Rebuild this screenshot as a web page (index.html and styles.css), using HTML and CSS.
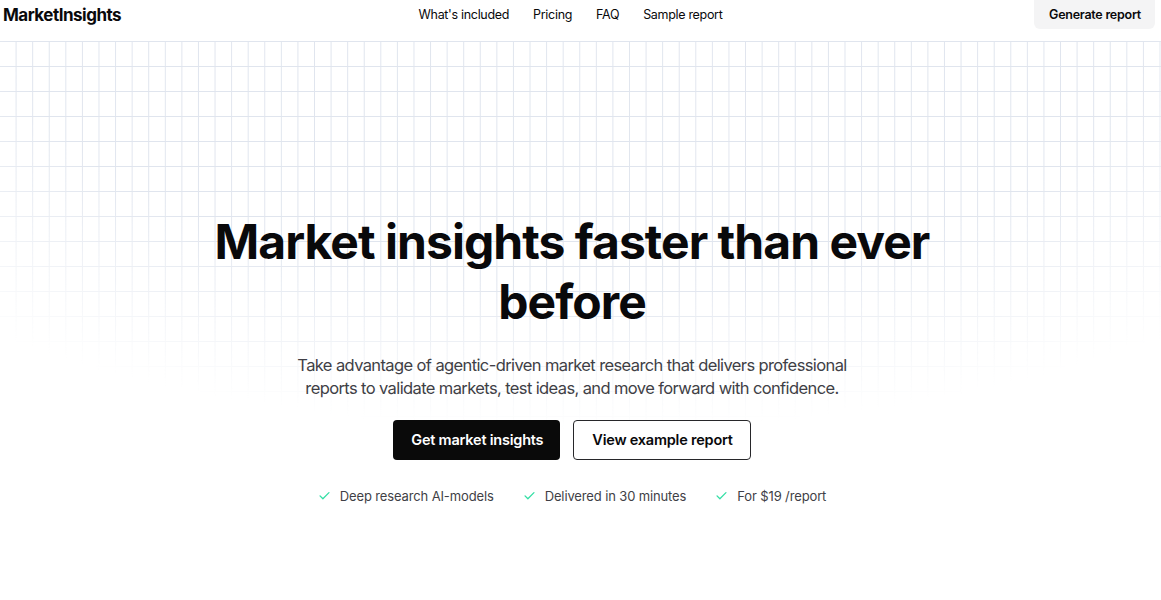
FILE: index.html
```html
<!DOCTYPE html>
<html lang="en">
<head>
<meta charset="utf-8">
<title>MarketInsights</title>
<link rel="stylesheet" href="styles.css">
</head>
<body>
<header class="site-header">
  <div class="header-row">
    <div class="brand">MarketInsights</div>
    <nav class="nav">
      <a href="#">What's included</a>
      <a href="#">Pricing</a>
      <a href="#">FAQ</a>
      <a href="#">Sample report</a>
    </nav>
    <div class="header-actions">
      <a class="btn-generate" href="#">Generate report</a>
    </div>
  </div>
</header>
<main class="hero">
  <div class="hero-inner">
    <h1 class="hero-title">Market insights faster than ever before</h1>
    <p class="hero-sub">Take advantage of agentic-driven market research that delivers professional<br>reports to validate markets, test ideas, and move forward with confidence.</p>
    <div class="hero-actions">
      <a class="btn btn-primary" href="#">Get market insights</a>
      <a class="btn btn-outline" href="#">View example report</a>
    </div>
    <ul class="features">
      <li><svg class="check" viewBox="0 0 16 16"><path d="M2.5 8.5l3.5 3.5L13.5 4.5"/></svg>Deep research AI-models</li>
      <li><svg class="check" viewBox="0 0 16 16"><path d="M2.5 8.5l3.5 3.5L13.5 4.5"/></svg>Delivered in 30 minutes</li>
      <li><svg class="check" viewBox="0 0 16 16"><path d="M2.5 8.5l3.5 3.5L13.5 4.5"/></svg>For $19 /report</li>
    </ul>
  </div>
</main>
</body>
</html>
```

FILE: styles.css
```css
* { box-sizing: border-box; }
html, body { margin: 0; padding: 0; }
body {
  font-family: Inter, "Noto Sans", "Liberation Sans", sans-serif;
  color: #09090b;
  background: #ffffff;
  width: 1161px;
  overflow: hidden;
}
a { color: inherit; text-decoration: none; }

.site-header {
  height: 41px;
  padding: 0 6px 0 3px;
}
.header-row {
  height: 29px;
  display: flex;
  align-items: center;
}
.brand {
  flex: 1 1 0;
  font-size: 17px;
  font-weight: 700;
  letter-spacing: -0.03em;
}
.nav {
  display: flex;
  gap: 24px;
  font-size: 12.5px;
  letter-spacing: -0.025em;
  font-weight: 400;
  margin-right: 17px;
}
.header-actions {
  flex: 1 1 0;
  display: flex;
  justify-content: flex-end;
}
.btn-generate {
  height: 29px;
  display: flex;
  align-items: center;
  padding: 0 14px 0 15px;
  background: #f4f4f5;
  border-radius: 0 0 6px 6px;
  font-size: 12.5px;
  letter-spacing: -0.02em;
  font-weight: 600;
}

.hero {
  position: relative;
  height: 559px;
}
.hero::before {
  content: "";
  position: absolute;
  left: 0; right: 0; top: 0;
  height: 470px;
  background-image:
    linear-gradient(to right, transparent calc(100% - 1px), #e0e5ee calc(100% - 1px)),
    linear-gradient(to bottom, #e0e5ee 1px, transparent 1px);
  background-size: calc(100% / 70) 25px;
  -webkit-mask-image: radial-gradient(ellipse 900px 390px at 50% 0, #000 62%, transparent 100%);
  mask-image: radial-gradient(ellipse 900px 390px at 50% 0, #000 62%, transparent 100%);
  z-index: 0;
}
.hero-inner {
  position: relative;
  z-index: 1;
  padding: 171px 17px 0 0;
  display: flex;
  flex-direction: column;
  align-items: center;
  text-align: center;
}
.hero-title {
  margin: 0;
  width: 760px;
  font-size: 48px;
  line-height: 60px;
  font-weight: 700;
  letter-spacing: -0.02em;
}
.hero-sub {
  margin: 22px 0 0;
  font-size: 16.5px;
  line-height: 23.4px;
  letter-spacing: -0.037em;
  color: #3f3f46;
}
.hero-actions {
  margin-top: 19px;
  display: flex;
  gap: 13px;
}
.btn {
  height: 40px;
  display: flex;
  align-items: center;
  padding: 0 17px 0 18px;
  border-radius: 4px;
  font-size: 14.5px;
  letter-spacing: -0.015em;
  font-weight: 600;
}
.btn-primary {
  background: #0a0a0a;
  color: #ffffff;
}
.btn-outline {
  background: #ffffff;
  border: 1px solid #27272a;
  color: #09090b;
}
.features {
  list-style: none;
  margin: 26px 0 0;
  padding: 0;
  display: flex;
  gap: 29px;
  font-size: 13px;
  line-height: 20px;
  letter-spacing: -0.01em;
  color: #3f3f46;
}
.features li {
  display: flex;
  align-items: center;
  gap: 9px;
}
.check {
  width: 13px;
  height: 13px;
  fill: none;
  stroke: #34dfa5;
  stroke-width: 1.6;
  stroke-linecap: round;
  stroke-linejoin: round;
}
```
